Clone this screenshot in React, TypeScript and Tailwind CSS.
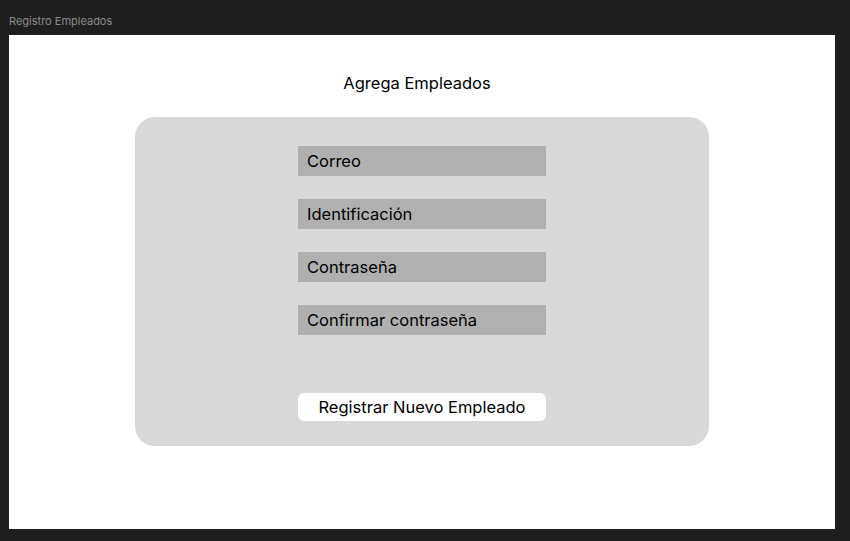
import React from "react";

export default function App() {
  const fields = ["Correo", "Identificación", "Contraseña", "Confirmar contraseña"];
  return (
    <div className="w-[850px] h-[541px] bg-[#1e1e1e] overflow-hidden" style={{ fontFamily: "Inter, 'Liberation Sans', sans-serif" }}>
      <div className="h-[35px] pl-[9px] pt-[14px] text-[11px] leading-[14px] text-[#8c8c8c]">Registro Empleados</div>
      <div className="ml-[9px] w-[826px] h-[494px] bg-white flex flex-col items-center pt-[36px]">
        <div className="pr-[10px] text-[16.5px] leading-[24px] text-black">Agrega Empleados</div>
        <div className="mt-[22px] w-[574px] h-[329px] bg-[#d9d9d9] rounded-[20px] flex flex-col items-center pt-[29px]">
          <div className="flex flex-col gap-[23px]">
            {fields.map((f) => (
              <div key={f} className="w-[248px] h-[30px] bg-[#b0b0b0] pl-[9px] flex items-center text-[16.5px] text-black">
                {f}
              </div>
            ))}
          </div>
          <div className="mt-[58px] w-[248px] h-[28px] bg-white rounded-[6px] flex items-center justify-center text-[16.5px] text-black">
            Registrar Nuevo Empleado
          </div>
        </div>
      </div>
    </div>
  );
}
